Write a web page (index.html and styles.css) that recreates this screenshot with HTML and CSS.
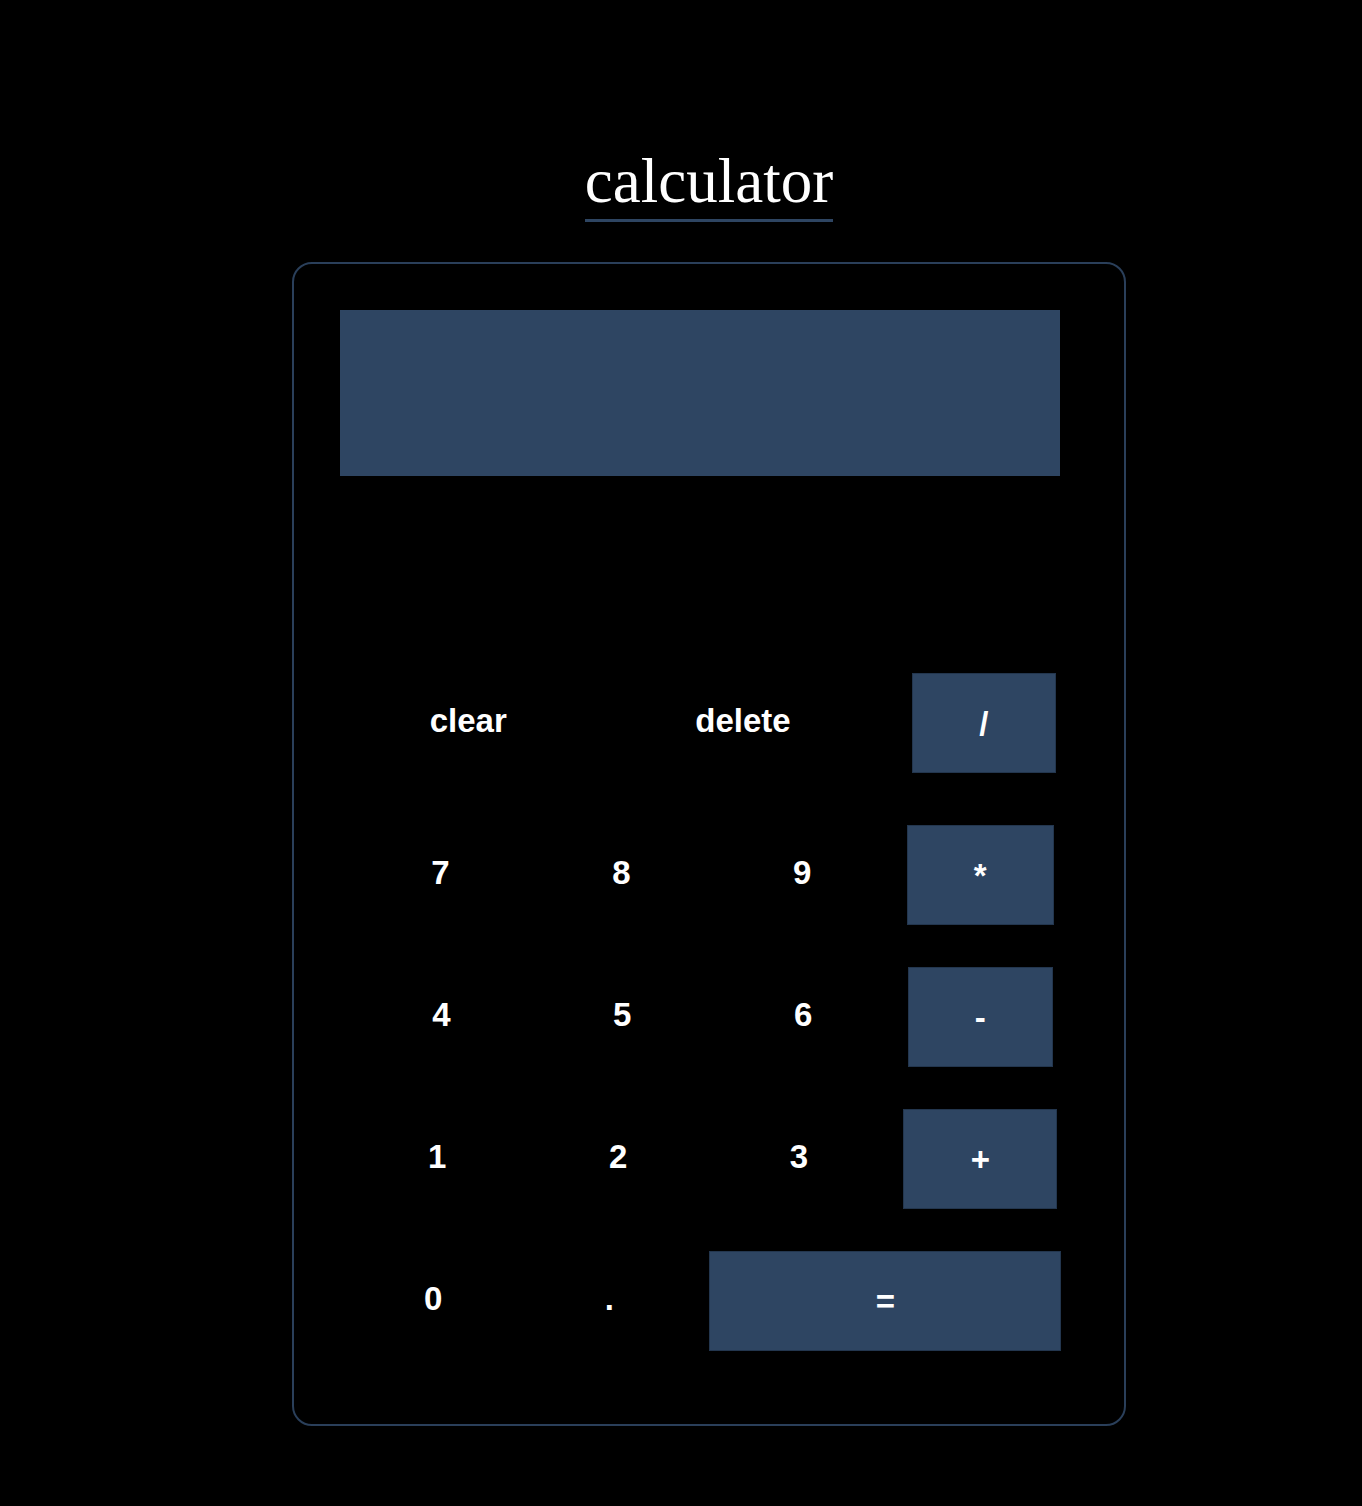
FILE: index.html
```html
<!DOCTYPE html>
<html lang="en">
<head>
<meta charset="utf-8">
<title>calculator</title>
<link rel="stylesheet" href="styles.css">
</head>
<body>
<main class="page">
  <h1 class="title">calculator</h1>
  <section class="calculator">
    <div class="display"></div>
    <div class="keypad">
      <div class="row row-top">
        <button class="key">clear</button>
        <button class="key">delete</button>
        <button class="key op">/</button>
      </div>
      <div class="row">
        <button class="key">7</button>
        <button class="key">8</button>
        <button class="key">9</button>
        <button class="key op">*</button>
      </div>
      <div class="row">
        <button class="key">4</button>
        <button class="key">5</button>
        <button class="key">6</button>
        <button class="key op">-</button>
      </div>
      <div class="row">
        <button class="key">1</button>
        <button class="key">2</button>
        <button class="key">3</button>
        <button class="key op">+</button>
      </div>
      <div class="row">
        <button class="key">0</button>
        <button class="key">.</button>
        <button class="key op equals">=</button>
      </div>
    </div>
  </section>
</main>
</body>
</html>
```

FILE: styles.css
```css
html, body {
  margin: 0;
  padding: 0;
  background: #000;
}

.page {
  display: flex;
  flex-direction: column;
  align-items: center;
  padding: 145px 0 0 56px;
}

.title {
  display: inline-block;
  margin: 0;
  padding-bottom: 1px;
  font-family: "Liberation Serif", serif;
  font-weight: normal;
  font-size: 63px;
  line-height: normal;
  color: #fff;
  border-bottom: 3px solid #2e4562;
}

.calculator {
  box-sizing: border-box;
  width: 834px;
  margin-top: 40px;
  padding: 46px 46px 73px;
  border: 2px solid #2a3f5a;
  border-radius: 20px;
}

.display {
  width: 720px;
  height: 166px;
  background: #2e4562;
}

.keypad {
  display: flex;
  flex-direction: column;
  gap: 42px;
  margin-top: 197px;
}

.row {
  display: flex;
  justify-content: center;
  align-items: flex-start;
  gap: 28px;
}

.row-top {
  gap: 54px;
  margin-bottom: 10px;
}

.key {
  margin: 0;
  padding: 28.5px 67.25px 34.5px;
  border: none;
  background: transparent;
  color: #fff;
  font-family: "Liberation Sans", Arial, sans-serif;
  font-weight: bold;
  font-size: 33px;
  line-height: 37px;
}

.op {
  padding: 30.5px 66.25px;
  border: 1px solid #23364e;
  background: #2e4562;
}

.equals {
  width: 352px;
}
```
